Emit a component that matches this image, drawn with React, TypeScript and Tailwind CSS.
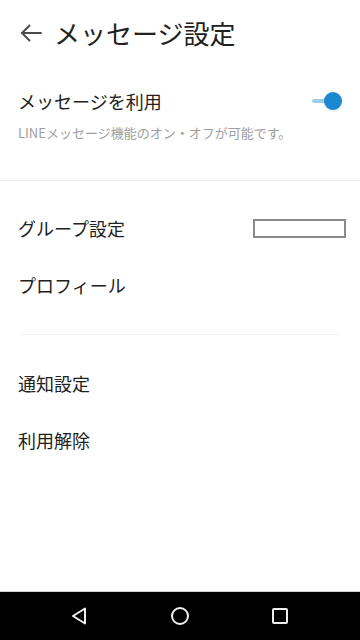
import React, { useState } from 'react';

const font = { fontFamily: '"Noto Sans CJK JP", "Noto Sans", Roboto, sans-serif' };

const Row: React.FC<{ label: string; children?: React.ReactNode }> = ({ label, children }) => (
  <div className="flex h-[57px] items-center justify-between pl-[18px] pr-[14px]">
    <span className="text-[18px] text-[#212121]">{label}</span>
    {children}
  </div>
);

export default function App() {
  const [enabled, setEnabled] = useState(true);

  return (
    <div className="flex h-[640px] w-[360px] flex-col overflow-hidden bg-white" style={font}>
      {/* header */}
      <div className="flex h-[66px] items-center">
        <button className="ml-[20px] mr-[12px] flex h-[22px] w-[22px] items-center justify-center">
          <svg width="22" height="18" viewBox="0 0 22 18" fill="none" stroke="#4a4a4a" strokeWidth="1.9" strokeLinecap="round" strokeLinejoin="round">
            <path d="M2 9H21" />
            <path d="M9.5 1.5L2 9l7.5 7.5" />
          </svg>
        </button>
        <h1 className="text-[26px] leading-none text-[#212121]">メッセージ設定</h1>
      </div>

      {/* message toggle */}
      <div className="mt-[13px] flex h-[44px] items-center justify-between pl-[18px] pr-[18px]">
        <span className="text-[18px] text-[#212121]">メッセージを利用</span>
        <button onClick={() => setEnabled(!enabled)} className="relative h-[18px] w-[32px]">
          <span className={`absolute left-[2px] top-[7px] h-[4px] w-[22px] rounded-full ${enabled ? 'bg-[#9ccfee]' : 'bg-[#cccccc]'}`} />
          <span
            className={`absolute top-0 h-[18px] w-[18px] rounded-full shadow-sm ${enabled ? 'left-[14px] bg-[#1c88d2]' : 'left-0 bg-[#f1f1f1]'}`}
          />
        </button>
      </div>
      <div className="flex h-[20px] items-center pl-[18px] text-[13px] text-[#9e9e9e]">
        LINEメッセージ機能のオン・オフが可能です。
      </div>

      <div className="mt-[37px] h-px bg-[#ececec]" />

      <div className="pt-[19px]">
        <Row label="グループ設定">
          <div className="h-[19px] w-[93px] border-2 border-[#8a8a8a] bg-white" />
        </Row>
        <Row label="プロフィール" />
      </div>

      <div className="mx-[18px] mt-[20px] h-px bg-[#f3f3f3]" />

      <div className="pt-[20px]">
        <Row label="通知設定" />
        <Row label="利用解除" />
      </div>

      <div className="flex-1" />

      {/* android nav bar */}
      <div className="h-px bg-[#d0d0d0]" />
      <div className="flex h-[48px] items-center justify-center gap-[80px] bg-black">
        <svg width="20" height="20" viewBox="0 0 20 20" fill="none" stroke="#eeeeee" strokeWidth="2" strokeLinejoin="round">
          <path d="M15 2.5V17.5L3 10Z" />
        </svg>
        <svg width="20" height="20" viewBox="0 0 20 20" fill="none" stroke="#eeeeee" strokeWidth="2">
          <circle cx="10" cy="10" r="8" />
        </svg>
        <svg width="20" height="20" viewBox="0 0 20 20" fill="none" stroke="#eeeeee" strokeWidth="2">
          <rect x="3" y="3" width="14" height="14" rx="1" />
        </svg>
      </div>
    </div>
  );
}
